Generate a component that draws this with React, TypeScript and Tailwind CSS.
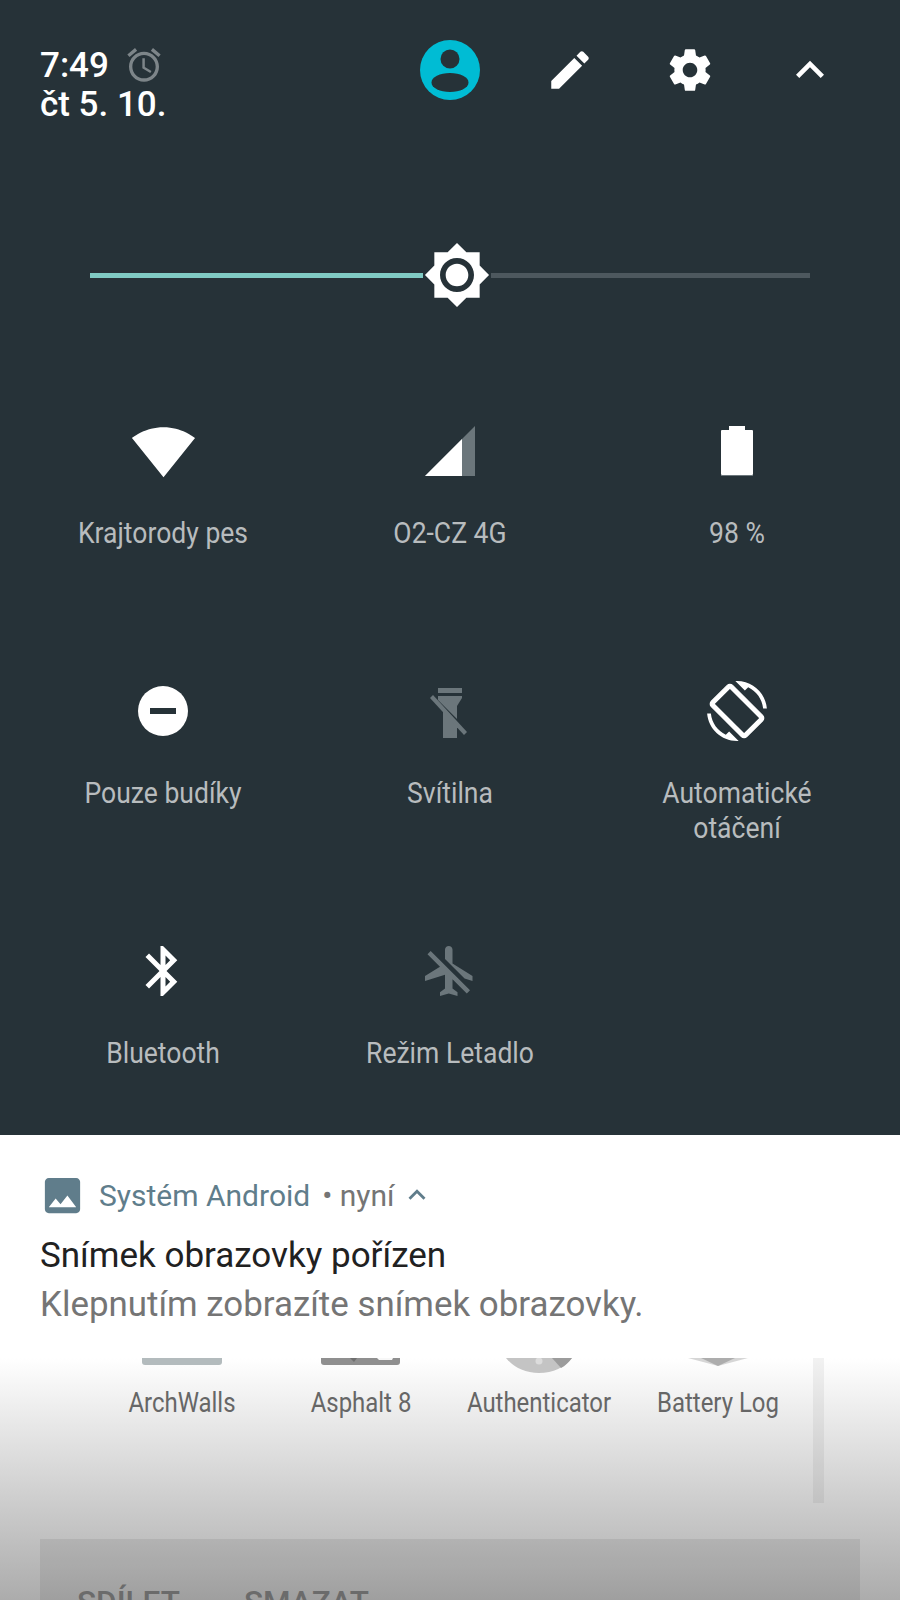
const IconSvg = ({ d, size, className }: { d: string; size: number; className?: string }) => (
  <svg width={size} height={size} viewBox="0 0 24 24" className={className} fill="currentColor">
    <path d={d} />
  </svg>
);

const paths = {
  alarm:
    "M22 5.72l-4.6-3.86-1.29 1.53 4.6 3.86L22 5.72zM7.88 3.39L6.6 1.86 2 5.71l1.29 1.53 4.59-3.85zM12.5 8H11v6l4.75 2.85.75-1.23-4-2.37V8zM12 4c-4.97 0-9 4.03-9 9s4.03 9 9 9c4.97 0 9-4.03 9-9s-4.03-9-9-9zm0 16c-3.87 0-7-3.13-7-7s3.13-7 7-7 7 3.13 7 7-3.13 7-7 7z",
  pencil:
    "M3 17.25V21h3.75L17.81 9.94l-3.75-3.75L3 17.25zM20.71 7.04c.39-.39.39-1.02 0-1.41l-2.34-2.34c-.39-.39-1.02-.39-1.41 0l-1.83 1.83 3.75 3.75 1.83-1.83z",
  gear:
    "M19.43 12.98c.04-.32.07-.64.07-.98s-.03-.66-.07-.98l2.11-1.65c.19-.15.24-.42.12-.64l-2-3.46c-.12-.22-.39-.3-.61-.22l-2.49 1c-.52-.4-1.08-.73-1.69-.98l-.38-2.65C14.46 2.18 14.25 2 14 2h-4c-.25 0-.46.18-.49.42l-.38 2.65c-.61.25-1.17.59-1.69.98l-2.49-1c-.23-.09-.49 0-.61.22l-2 3.46c-.13.22-.07.49.12.64l2.11 1.65c-.04.32-.07.65-.07.98s.03.66.07.98l-2.11 1.65c-.19.15-.24.42-.12.64l2 3.46c.12.22.39.3.61.22l2.49-1c.52.4 1.08.73 1.69.98l.38 2.65c.03.24.24.42.49.42h4c.25 0 .46-.18.49-.42l.38-2.65c.61-.25 1.17-.59 1.69-.98l2.49 1c.23.09.49 0 .61-.22l2-3.46c.12-.22.07-.49-.12-.64l-2.11-1.65zM12 15.5c-1.93 0-3.5-1.57-3.5-3.5s1.57-3.5 3.5-3.5 3.5 1.57 3.5 3.5-1.57 3.5-3.5 3.5z",
  chevron: "M12 8l-6 6 1.41 1.41L12 10.83l4.59 4.58L18 14z",
  brightness:
    "M20 8.69V4h-4.69L12 .69 8.69 4H4v4.69L.69 12 4 15.31V20h4.69L12 23.31 15.31 20H20v-4.69L23.31 12 20 8.69zM12 18c-3.31 0-6-2.69-6-6s2.69-6 6-6 6 2.69 6 6-2.69 6-6 6zm0-10c-2.21 0-4 1.79-4 4s1.79 4 4 4 4-1.79 4-4-1.79-4-4-4z",
  wifi: "M12.01 21.49L23.64 7c-.45-.34-4.93-4-11.64-4C5.28 3 .81 6.66.36 7l11.64 14.5.01-.01z",
  rotationArcs:
    "M16.48 2.52c3.27 1.55 5.61 4.72 5.97 8.48h1.5C23.44 4.84 18.29 0 12 0l-.66.03 3.81 3.81 1.33-1.32zM7.52 21.48C4.25 19.94 1.91 16.76 1.55 13H.05C.56 19.16 5.71 24 12 24l.66-.03-3.81-3.81-1.33 1.32z",
  rotationPhone:
    "M10.23 1.75c-.59-.59-1.54-.59-2.12 0L1.75 8.11c-.59.59-.59 1.54 0 2.12l12.02 12.02c.59.59 1.54.59 2.12 0l6.36-6.36c.59-.59.59-1.54 0-2.12L10.23 1.75zm4.6 19.44L2.81 9.17l6.36-6.36 12.02 12.02-6.36 6.36z",
  bluetooth:
    "M17.71 7.71L12 2h-1v7.59L6.41 5 5 6.41 10.59 12 5 17.59 6.41 19 11 14.41V22h1l5.71-5.71-4.3-4.29 4.3-4.29zM13 5.83l1.88 1.88L13 9.59V5.83zm1.88 10.46L13 18.17v-3.76l1.88 1.88z",
  airplaneOff:
    "M13 9V3.5c0-.83-.67-1.5-1.5-1.5S10 2.67 10 3.5v3.68l7.83 7.83L21 16v-2l-8-5zM3 5.27l4.99 4.99L2 14v2l8-2.5V19l-2 1.5V22l3.5-1 3.5 1v-1.5L13 19v-3.73L18.73 21 20 19.73 4.27 4 3 5.27z",
  image:
    "M21 19V5c0-1.1-.9-2-2-2H5c-1.1 0-2 .9-2 2v14c0 1.1.9 2 2 2h14c1.1 0 2-.9 2-2zM8.5 13.5l2.5 3.01L14.5 12l4.5 6H5l3.5-4.5z",
};

function Avatar() {
  return (
    <svg width="60" height="60" viewBox="0 0 60 60">
      <circle cx="30" cy="30" r="30" fill="#00bcd4" />
      <circle cx="30" cy="19" r="9.5" fill="#263238" />
      <ellipse cx="30" cy="42.5" rx="18.5" ry="9.5" fill="#263238" />
    </svg>
  );
}

function SignalIcon() {
  return (
    <svg width="60" height="60" viewBox="0 0 60 60">
      <polygon points="5,55 55,5 55,55" fill="#6b767b" />
      <polygon points="5,55 42,18 42,55" fill="#ffffff" />
    </svg>
  );
}

function BatteryIcon() {
  return (
    <svg width="60" height="60" viewBox="0 0 60 60">
      <rect x="22" y="5" width="16" height="5" fill="#ffffff" />
      <rect x="14" y="9" width="32" height="45" rx="1" fill="#ffffff" />
      <rect x="14" y="54" width="32" height="1" fill="#6b767b" />
    </svg>
  );
}

function DndIcon() {
  return (
    <svg width="60" height="60" viewBox="0 0 60 60">
      <circle cx="30" cy="30" r="25" fill="#ffffff" />
      <rect x="17" y="27" width="26" height="6" fill="#263238" />
    </svg>
  );
}

function FlashlightOff() {
  return (
    <svg width="60" height="60" viewBox="0 0 60 60" fill="#6b767b">
      <rect x="18" y="7" width="24" height="5" />
      <polygon points="18,15 42,15 42,17 37,25 37,38 18,19" />
      <polygon points="23,27 37,41 37,44 40,47 37,47 37,57 23,57" />
      <polygon points="10,17 13,14 47,51 44,54" />
    </svg>
  );
}

function RotationIcon() {
  return (
    <svg width="60" height="60" viewBox="0 0 24 24" fill="#ffffff">
      <path d={paths.rotationArcs} />
      <path d={paths.rotationPhone} stroke="#ffffff" strokeWidth="0.5" />
    </svg>
  );
}

function AuthenticatorPeek() {
  return (
    <svg width="68" height="15" viewBox="0 0 68 15">
      <path d="M1 0h66c-7 9-19 15-33 15S8 9 1 0z" fill="#c4c4c4" />
      <path d="M47 0h20c-3 4-7 8-11 10z" fill="#9c9c9c" />
      <circle cx="34" cy="3" r="3.5" fill="#dcdcdc" />
    </svg>
  );
}

function AsphaltPeek() {
  return (
    <svg width="79" height="7" viewBox="0 0 79 7">
      <path d="M0 0h79v4c0 2-1 3-3 3H3C1 7 0 6 0 4z" fill="#8f8f8f" />
      <path d="M29 0h7l-3 4z" fill="#6f6f6f" />
      <path d="M56 0h16l-1 2H58z" fill="#f7f7f7" />
    </svg>
  );
}

function BatteryPeek() {
  return (
    <svg width="60" height="8" viewBox="0 0 60 8">
      <polygon points="0,0 60,0 30,8" fill="#d6d6d6" />
      <polygon points="13,0 47,0 30,8" fill="#adadad" />
    </svg>
  );
}

const tiles = [
  { label: "Krajtorody pes", icon: <IconSvg d={paths.wifi} size={65} className="text-white" /> },
  { label: "O2-CZ 4G", icon: <SignalIcon /> },
  { label: "98 %", icon: <BatteryIcon /> },
  { label: "Pouze budíky", icon: <DndIcon /> },
  { label: "Svítilna", icon: <FlashlightOff /> },
  { label: "Automatické otáčení", icon: <RotationIcon /> },
  { label: "Bluetooth", icon: <IconSvg d={paths.bluetooth} size={60} className="text-white" /> },
  { label: "Režim Letadlo", icon: <IconSvg d={paths.airplaneOff} size={60} className="text-[#6b767b]" /> },
];

const apps = [
  { name: "ArchWalls", icon: <div className="h-[7px] w-[80px] rounded-b-[3px] bg-[#b3bbbd]" /> },
  { name: "Asphalt 8", icon: <AsphaltPeek /> },
  { name: "Authenticator", icon: <AuthenticatorPeek /> },
  { name: "Battery Log", icon: <BatteryPeek /> },
];

export default function App() {
  return (
    <div
      className="flex h-[1600px] w-[900px] flex-col overflow-hidden bg-white"
      style={{ fontFamily: "Roboto, sans-serif" }}
    >
      <section className="h-[1135px] bg-[#263238]">
        <header className="flex h-[140px] justify-between pt-[40px] pl-[40px] pr-[30px]">
          <div className="pt-[7px] text-[35px] leading-[38px] font-medium text-white">
            <div className="flex items-center">
              <span>7:49</span>
              <IconSvg d={paths.alarm} size={40} className="ml-[15px] mt-[-3px] text-[#7d8589]" />
            </div>
            <div className="mt-px">čt 5. 10.</div>
          </div>
          <div className="flex h-[60px] text-white">
            <div className="flex w-[120px] items-center justify-center">
              <Avatar />
            </div>
            <div className="flex w-[120px] items-center justify-center">
              <IconSvg d={paths.pencil} size={50} />
            </div>
            <div className="flex w-[120px] items-center justify-center">
              <IconSvg d={paths.gear} size={50} />
            </div>
            <div className="flex w-[120px] items-center justify-center">
              <IconSvg d={paths.chevron} size={56} className="mt-[-1px]" />
            </div>
          </div>
        </header>

        <div className="mx-[90px] mt-[100px] flex h-[70px] w-[720px] items-center">
          <div className="h-[5px] w-[333px] bg-[#80cbc4]" />
          <IconSvg d={paths.brightness} size={68} className="shrink-0 text-white" />
          <div className="h-[5px] flex-1 bg-[#4d585e]" />
        </div>

        <div className="mt-[111px] grid grid-cols-3 auto-rows-[260px] px-[20px]">
          {tiles.map((tile) => (
            <div key={tile.label} className="flex flex-col items-center">
              <div className="flex h-[60px] items-center justify-center">{tile.icon}</div>
              <div className="mt-[35px] w-[200px] scale-x-[0.915] text-center text-[29px] leading-[35px] text-[#b8bcbe]">
                {tile.label}
              </div>
            </div>
          ))}
        </div>
      </section>

      <section className="flex h-[223px] flex-col pl-[40px]">
        <div className="mt-[43px] flex h-[34px] items-center">
          <IconSvg d={paths.image} size={47} className="ml-[-1px] mr-[-1px] shrink-0 text-[#607d8b]" />
          <span className="ml-[14px] text-[30px] text-[#607d8b]">Systém Android</span>
          <span className="ml-[12px] text-[30px] text-[#757575]">• nyní</span>
          <IconSvg d={paths.chevron} size={34} className="ml-[5px] text-[#607d8b]" />
        </div>
        <div className="mt-[22px] text-[35px] leading-[44px] text-[#212121]">Snímek obrazovky pořízen</div>
        <div className="mt-[5px] text-[34.9px] leading-[44px] text-[#757575]">
          Klepnutím zobrazíte snímek obrazovky.
        </div>
      </section>

      <section className="h-[242px] bg-gradient-to-b from-white to-[#acacac]">
        <div className="flex h-[145px] pl-[93px]">
          <div className="grid w-[714px] grid-cols-4">
            {apps.map((app) => (
              <div key={app.name} className="flex flex-col items-center">
                <div className="flex h-[26px] justify-center">{app.icon}</div>
                <div className="w-[170px] scale-x-[0.855] text-center text-[28px] leading-[38px] whitespace-nowrap text-[#666666]">
                  {app.name}
                </div>
              </div>
            ))}
          </div>
          <div className="ml-[6px] w-[11px] bg-black/5" />
        </div>
        <div className="mx-[40px] mt-[36px] flex h-[61px] gap-[64px] bg-black/[0.07] pl-[37px] pt-[46px] text-[31.5px] leading-[36px] font-medium text-[#6b6b6b]">
          <span>SDÍLET</span>
          <span>SMAZAT</span>
        </div>
      </section>
    </div>
  );
}
